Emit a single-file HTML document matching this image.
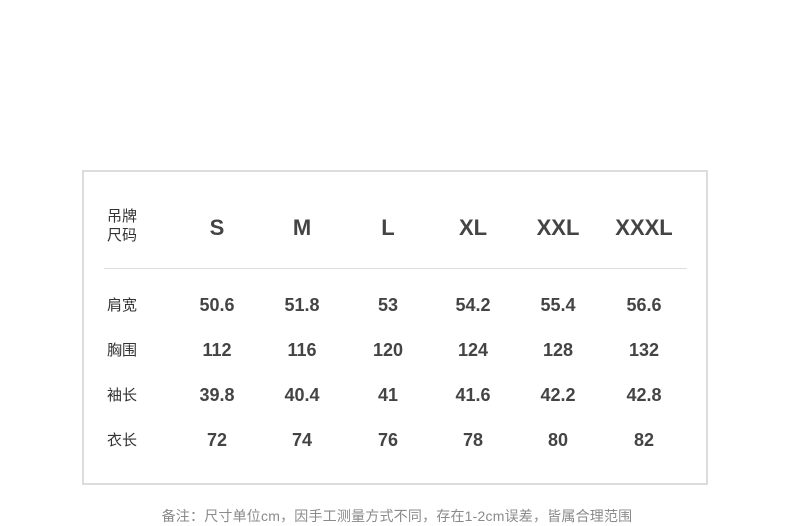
<!DOCTYPE html>
<html><head><meta charset="utf-8"><style>
body{margin:0;width:790px;height:523px;background:#fff;position:relative;overflow:hidden;font-family:"Liberation Sans","Noto Sans CJK SC",sans-serif;color:#3a3a3a}
.box{position:absolute;left:82px;top:170px;width:622px;height:311px;border:2px solid #dcdcdc}
.hr{position:absolute;left:104px;top:268px;width:583px;height:1px;background:#dedede}
.l{position:absolute;left:107px;font-size:15px;line-height:19px;color:#333}
.c{position:absolute;width:80px;margin-left:-40px;text-align:center;font-weight:bold;font-size:18px;color:#444}
.h{font-size:22px}
.note{position:absolute;left:0;width:794px;text-align:center;top:506px;font-size:14px;letter-spacing:0.2px;color:#8a8a8a}
</style></head><body>
<div class="box"></div><div class="hr"></div>
<div class="l" style="top:207px">吊牌<br>尺码</div>
<div class="l" style="top:296px">肩宽</div>
<div class="l" style="top:341px">胸围</div>
<div class="l" style="top:386px">袖长</div>
<div class="l" style="top:431px">衣长</div>
<div class="c h" style="left:217px;top:215px">S</div>
<div class="c h" style="left:302px;top:215px">M</div>
<div class="c h" style="left:388px;top:215px">L</div>
<div class="c h" style="left:473px;top:215px">XL</div>
<div class="c h" style="left:558px;top:215px">XXL</div>
<div class="c h" style="left:644px;top:215px">XXXL</div>
<div class="c" style="left:217px;top:295px">50.6</div><div class="c" style="left:302px;top:295px">51.8</div><div class="c" style="left:388px;top:295px">53</div><div class="c" style="left:473px;top:295px">54.2</div><div class="c" style="left:558px;top:295px">55.4</div><div class="c" style="left:644px;top:295px">56.6</div>
<div class="c" style="left:217px;top:340px">112</div><div class="c" style="left:302px;top:340px">116</div><div class="c" style="left:388px;top:340px">120</div><div class="c" style="left:473px;top:340px">124</div><div class="c" style="left:558px;top:340px">128</div><div class="c" style="left:644px;top:340px">132</div>
<div class="c" style="left:217px;top:385px">39.8</div><div class="c" style="left:302px;top:385px">40.4</div><div class="c" style="left:388px;top:385px">41</div><div class="c" style="left:473px;top:385px">41.6</div><div class="c" style="left:558px;top:385px">42.2</div><div class="c" style="left:644px;top:385px">42.8</div>
<div class="c" style="left:217px;top:430px">72</div><div class="c" style="left:302px;top:430px">74</div><div class="c" style="left:388px;top:430px">76</div><div class="c" style="left:473px;top:430px">78</div><div class="c" style="left:558px;top:430px">80</div><div class="c" style="left:644px;top:430px">82</div>
<div class="note">备注：尺寸单位cm，因手工测量方式不同，存在1-2cm误差，皆属合理范围</div>
</body></html>
